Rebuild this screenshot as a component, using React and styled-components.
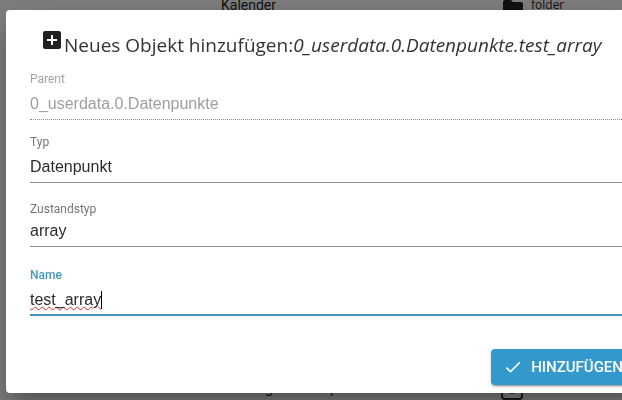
import React, { useState } from "react";
import styled, { createGlobalStyle } from "styled-components";
import { MdAddBox, MdCheck, MdFolder } from "react-icons/md";

const GlobalStyle = createGlobalStyle`
  * {
    box-sizing: border-box;
  }

  body {
    margin: 0;
    overflow: hidden;
    background-color: #808080;
    font-family: Roboto, "Liberation Sans", sans-serif;
  }
`;

const ObjectList = styled.div`
  display: flex;
  flex-direction: column;
  justify-content: space-between;
  height: 100vh;
  overflow: hidden;
`;

const ObjectRow = styled.div`
  display: grid;
  grid-template-columns: 272px 24px 1fr;
  grid-template-rows: 24px;
  column-gap: 7px;
  align-items: center;
  margin: ${(props) => (props.$last ? "0" : "-7px 0 0")};
  padding-left: 221px;
  color: #111;
  font-size: 14px;
  line-height: 24px;
`;

const FolderIcon = styled(MdFolder)`
  align-self: start;
  margin-top: 3px;
  margin-left: 1px;
  font-size: 24px;
`;

const ObjectType = styled.span`
  font-family: "Open Sans", sans-serif;
  font-size: 12px;
`;

const Letters = styled.span`
  display: flex;
  align-self: start;
  gap: 57px;
  padding-left: 44px;
  line-height: 24px;
`;

const StateIcon = styled.svg`
  align-self: end;
  margin-left: 1px;
  fill: none;
  stroke: #1c1c1c;
  stroke-width: 2;
`;

const Overlay = styled.div`
  position: fixed;
  inset: 0;
  overflow: hidden;
  padding: 10px 0 0 6px;
`;

const Dialog = styled.form`
  margin-right: -24px;
  padding: 15px 24px 8px;
  border-radius: 4px;
  background-color: #fff;
  box-shadow:
    0 11px 15px -7px rgba(0, 0, 0, 0.2),
    0 24px 38px 3px rgba(0, 0, 0, 0.14),
    0 9px 46px 8px rgba(0, 0, 0, 0.12);
`;

const Title = styled.h2`
  display: flex;
  align-items: flex-start;
  margin: 0 0 6px;
  padding-left: 10px;
  color: #333;
  font-family: "Open Sans", "Noto Sans", sans-serif;
  font-size: 19px;
  font-weight: 400;
  line-height: 40px;
  white-space: nowrap;

  svg {
    flex: none;
    margin-top: 3px;
    color: #212121;
    font-size: 24px;
  }
`;

const Field = styled.div`
  display: flex;
  flex-direction: column;
  margin-bottom: ${(props) => props.$gap || 0}px;
`;

const Label = styled.label`
  color: ${(props) => props.$color || "#757575"};
  font-size: 12px;
  font-weight: ${(props) => (props.$focused ? 500 : 400)};
  line-height: 16px;
`;

const Line = styled.div`
  display: flex;
  align-items: flex-end;
  height: ${(props) => props.$height}px;
  padding-bottom: ${(props) => (props.$focused ? 2 : 3)}px;
  border-bottom: ${(props) => props.$border || "1px solid #8c8c8c"};
`;

const TextInput = styled.input`
  width: 100%;
  height: 24px;
  padding: 0;
  border: 0;
  outline: 0;
  background: none;
  color: #2b2b2b;
  font-family: "Liberation Sans", Arial, sans-serif;
  font-size: 16px;
  line-height: 24px;

  &:disabled {
    color: #9e9e9e;
  }
`;

const NameInput = styled(TextInput)`
  width: auto;
  field-sizing: content;
  caret-color: transparent;
  text-decoration: underline wavy #d32f2f 1px;
`;

const Caret = styled.span`
  width: 1px;
  height: 18px;
  margin-bottom: 3px;
  background-color: #000;
`;

const Select = styled.select`
  width: 100%;
  height: 24px;
  padding: 0;
  border: 0;
  outline: 0;
  appearance: none;
  background: none;
  color: #2b2b2b;
  font-family: "Liberation Sans", Arial, sans-serif;
  font-size: 16px;
  line-height: 24px;
`;

const Actions = styled.div`
  display: flex;
  justify-content: flex-end;
  padding-top: 33px;
`;

const AddButton = styled.button`
  display: flex;
  align-items: center;
  gap: 8px;
  height: 36px;
  margin-right: -16px;
  padding: 0 15px 0 12px;
  border: 0;
  border-radius: 4px;
  background-color: #3399cc;
  box-shadow:
    0 3px 1px -2px rgba(0, 0, 0, 0.2),
    0 2px 2px 0 rgba(0, 0, 0, 0.14),
    0 1px 5px 0 rgba(0, 0, 0, 0.12);
  color: #fff;
  font-family: Roboto, sans-serif;
  font-size: 15px;
  font-weight: 500;
  text-transform: uppercase;

  svg {
    font-size: 20px;
  }
`;

export default function App() {
  const [type, setType] = useState("state");
  const [stateType, setStateType] = useState("array");
  const [name, setName] = useState("test_array");
  const parent = "0_userdata.0.Datenpunkte";

  return (
    <>
      <GlobalStyle />
      <ObjectList>
        <ObjectRow>
          <span>Kalender</span>
          <FolderIcon />
          <ObjectType>folder</ObjectType>
        </ObjectRow>
        <ObjectRow $last>
          <Letters>
            <span>g</span>
            <span>p</span>
          </Letters>
          <StateIcon width="22" height="22" viewBox="0 0 22 22">
            <rect x="1" y="1" width="20" height="20" rx="3" />
            <circle cx="11" cy="11" r="4" />
          </StateIcon>
        </ObjectRow>
      </ObjectList>

      <Overlay>
        <Dialog
          role="dialog"
          aria-labelledby="dialog-title"
          onSubmit={(e) => e.preventDefault()}
        >
          <Title id="dialog-title">
            <MdAddBox />
            <span>
              Neues Objekt hinzufügen:
              <em>
                {parent}.{name}
              </em>
            </span>
          </Title>

          <Field $gap={14}>
            <Label htmlFor="parent" $color="#a3a3a3">
              Parent
            </Label>
            <Line $height={33} $border="1px dotted #8c8c8c">
              <TextInput id="parent" value={parent} disabled />
            </Line>
          </Field>

          <Field $gap={18}>
            <Label htmlFor="type">Typ</Label>
            <Line $height={33}>
              <Select
                id="type"
                value={type}
                onChange={(e) => setType(e.target.value)}
              >
                <option value="state">Datenpunkt</option>
              </Select>
            </Line>
          </Field>

          <Field $gap={20}>
            <Label htmlFor="state-type">Zustandstyp</Label>
            <Line $height={30}>
              <Select
                id="state-type"
                value={stateType}
                onChange={(e) => setStateType(e.target.value)}
              >
                <option value="array">array</option>
              </Select>
            </Line>
          </Field>

          <Field>
            <Label htmlFor="name" $color="#4499bb" $focused>
              Name
            </Label>
            <Line $height={33} $border="2px solid #4095bd" $focused>
              <NameInput
                id="name"
                value={name}
                spellCheck={false}
                onChange={(e) => setName(e.target.value)}
              />
              <Caret />
            </Line>
          </Field>

          <Actions>
            <AddButton type="submit">
              <MdCheck />
              Hinzufügen
            </AddButton>
          </Actions>
        </Dialog>
      </Overlay>
    </>
  );
}
